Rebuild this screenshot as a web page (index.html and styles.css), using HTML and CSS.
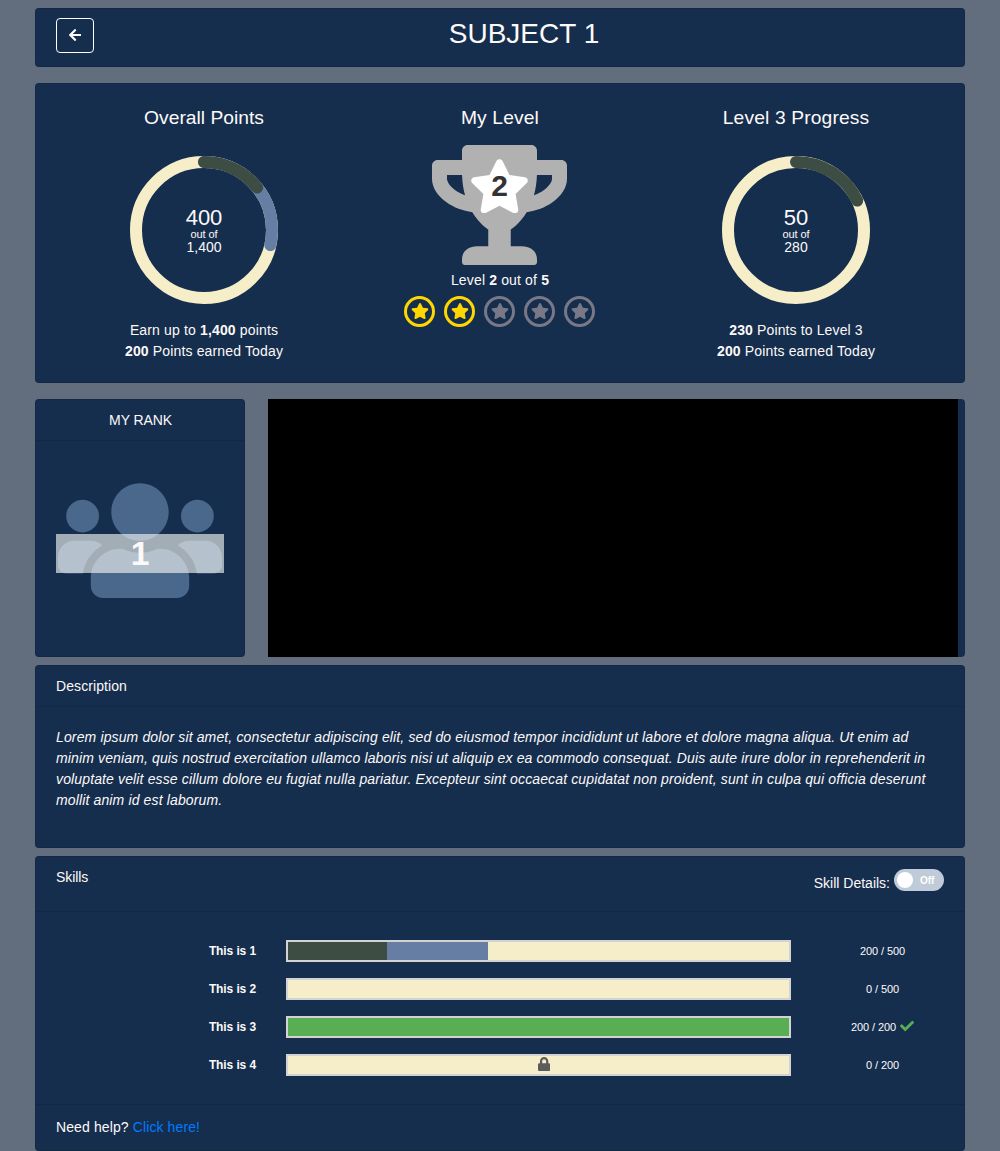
FILE: index.html
```html
<!DOCTYPE html>
<html lang="en">
<head>
<meta charset="utf-8">
<title>Subject 1</title>
<link rel="stylesheet" href="styles.css">
</head>
<body>
<svg class="defs" width="0" height="0" aria-hidden="true">
  <symbol id="star" viewBox="0 0 576 512"><path d="M259.3 17.8L194 150.2 47.9 171.5c-26.2 3.8-36.7 36.1-17.7 54.6l105.7 103-25 145.5c-4.5 26.3 23.2 46 46.4 33.7L288 439.6l130.7 68.7c23.2 12.2 50.9-7.4 46.4-33.7l-25-145.5 105.7-103c19-18.5 8.5-50.8-17.7-54.6L382 150.2 316.7 17.8c-11.7-23.6-45.6-23.9-57.4 0z"/></symbol>
</svg>
<main class="page">
  <header class="card title-bar">
    <button class="back" aria-label="Back"><svg viewBox="0 0 448 512"><path d="M257.5 445.1l-22.2 22.2c-9.4 9.4-24.6 9.4-33.9 0L7 273c-9.4-9.4-9.4-24.6 0-33.9L201.4 44.7c9.4-9.4 24.6-9.4 33.9 0l22.2 22.2c9.5 9.5 9.3 25-.4 34.3L136.6 216H424c13.3 0 24 10.7 24 24v32c0 13.3-10.7 24-24 24H136.6l120.5 114.8c9.8 9.3 10 24.8.4 34.3z"/></svg></button>
    <h1>SUBJECT 1</h1>
  </header>

  <section class="card summary">
    <div class="stat">
      <h2>Overall Points</h2>
      <div class="ring">
        <svg viewBox="0 0 148 148">
          <circle class="track" cx="74" cy="74" r="68"/>
          <circle class="today" cx="74" cy="74" r="68" pathLength="1400" stroke-dasharray="400 1400"/>
          <circle class="before" cx="74" cy="74" r="68" pathLength="1400" stroke-dasharray="200 1400"/>
        </svg>
        <div class="ring-label"><span class="big">400</span><span class="small">out of</span><span class="total">1,400</span></div>
      </div>
      <p>Earn up to <b>1,400</b> points</p>
      <p><b>200</b> Points earned Today</p>
    </div>
    <div class="stat level">
      <h2 class="spaced">My Level</h2>
      <div class="trophy">
        <svg class="cup" viewBox="0 0 576 512"><path d="M552 64H448V24c0-13.3-10.7-24-24-24H152c-13.3 0-24 10.7-24 24v40H24C10.7 64 0 74.7 0 88v56c0 35.7 22.5 72.5 61.9 100.7 31.5 22.7 69.8 37.1 110 41.7C203.3 338.5 240 360 240 360v72h-48c-35.3 0-64 20.7-64 56v12c0 6.6 5.4 12 12 12h296c6.6 0 12-5.4 12-12v-12c0-35.3-28.7-56-64-56h-48v-72s36.7-21.5 68.1-73.6c40.3-4.6 78.6-19 110-41.7 39.3-28.3 61.9-65 61.9-100.7V88c0-13.3-10.7-24-24-24zM99.3 192.8C74.9 175.2 64 155.6 64 144v-16h64.2c1 32.6 5.8 61.2 12.8 86.2-15.1-5.2-29.2-12.4-41.7-21.4zM512 144c0 16.1-17.7 36.1-35.3 48.8-12.5 9-26.7 16.2-41.8 21.4 7-25 11.8-53.6 12.8-86.2H512v16z"/></svg>
        <svg class="cup-star"><use href="#star"/></svg>
        <span class="cup-number">2</span>
      </div>
      <p>Level <b>2</b> out of <b>5</b></p>
      <div class="stars">
        <span class="earned"><svg><use href="#star"/></svg></span>
        <span class="earned"><svg><use href="#star"/></svg></span>
        <span><svg><use href="#star"/></svg></span>
        <span><svg><use href="#star"/></svg></span>
        <span><svg><use href="#star"/></svg></span>
      </div>
    </div>
    <div class="stat">
      <h2 class="spaced">Level 3 Progress</h2>
      <div class="ring">
        <svg viewBox="0 0 148 148">
          <circle class="track" cx="74" cy="74" r="68"/>
          <circle class="before" cx="74" cy="74" r="68" pathLength="280" stroke-dasharray="50 280"/>
        </svg>
        <div class="ring-label"><span class="big">50</span><span class="small">out of</span><span class="total">280</span></div>
      </div>
      <p class="to-level"><b>230</b> Points to Level 3</p>
      <p><b>200</b> Points earned Today</p>
    </div>
  </section>

  <div class="rank-row">
    <section class="card rank">
      <h3>MY RANK</h3>
      <div class="rank-body">
        <svg viewBox="0 0 640 512"><path d="M96 224c35.3 0 64-28.7 64-64s-28.7-64-64-64-64 28.7-64 64 28.7 64 64 64zm448 0c35.3 0 64-28.7 64-64s-28.7-64-64-64-64 28.7-64 64 28.7 64 64 64zm32 32h-64c-17.6 0-33.5 7.1-45.1 18.6 40.3 22.1 68.9 62 75.1 109.4h66c17.7 0 32-14.3 32-32v-32c0-35.3-28.7-64-64-64zm-256 0c61.9 0 112-50.1 112-112S381.9 32 320 32 208 82.1 208 144s50.1 112 112 112zm76.8 32h-8.3c-20.8 10-43.9 16-68.5 16s-47.6-6-68.5-16h-8.3C179.6 288 128 339.6 128 403.2V432c0 26.5 21.5 48 48 48h288c26.5 0 48-21.5 48-48v-28.8c0-63.6-51.6-115.2-115.2-115.2zm-223.7-13.4C161.5 263.1 145.6 256 128 256H64c-35.3 0-64 28.7-64 64v32c0 17.7 14.3 32 32 32h65.9c6.3-47.4 34.9-87.3 75.2-109.4z"/></svg>
        <span class="rank-number">1</span>
      </div>
    </section>
    <section class="history"><div class="chart"></div></section>
  </div>

  <section class="card description">
    <h3>Description</h3>
    <p>Lorem ipsum dolor sit amet, consectetur adipiscing elit, sed do eiusmod tempor incididunt ut labore et dolore magna aliqua. Ut enim ad minim veniam, quis nostrud exercitation ullamco laboris nisi ut aliquip ex ea commodo consequat. Duis aute irure dolor in reprehenderit in voluptate velit esse cillum dolore eu fugiat nulla pariatur. Excepteur sint occaecat cupidatat non proident, sunt in culpa qui officia deserunt mollit anim id est laborum.</p>
  </section>

  <section class="card skills">
    <div class="skills-head">
      <h3>Skills</h3>
      <div class="details">Skill Details: <span class="toggle"><i></i>Off</span></div>
    </div>
    <div class="skill-list">
      <div class="skill"><b>This is 1</b><div class="bar"><div class="before-bar" style="width:19.8%"></div><div class="today-bar" style="width:20.2%"></div></div><span>200 / 500</span></div>
      <div class="skill"><b>This is 2</b><div class="bar"></div><span>0 / 500</span></div>
      <div class="skill"><b>This is 3</b><div class="bar"><div class="done-bar" style="width:100%"></div></div><span>200 / 200 <svg class="check" viewBox="0 0 512 512"><path d="M173.898 439.404l-166.4-166.4c-9.997-9.997-9.997-26.206 0-36.204l36.203-36.204c9.997-9.998 26.207-9.998 36.204 0L192 312.69 432.095 72.596c9.997-9.997 26.207-9.997 36.204 0l36.203 36.204c9.997 9.997 9.997 26.206 0 36.204l-294.4 294.401c-9.998 9.997-26.207 9.997-36.204-.001z"/></svg></span></div>
      <div class="skill"><b>This is 4</b><div class="bar locked"><svg class="lock" viewBox="0 0 448 512"><path d="M400 224h-24v-72C376 68.2 307.8 0 224 0S72 68.2 72 152v72H48c-26.5 0-48 21.5-48 48v192c0 26.5 21.5 48 48 48h352c26.5 0 48-21.5 48-48V272c0-26.5-21.5-48-48-48zm-104 0H152v-72c0-39.7 32.3-72 72-72s72 32.3 72 72v72z"/></svg></div><span>0 / 200</span></div>
    </div>
    <footer>Need help? <a href="#">Click here!</a></footer>
  </section>
</main>
</body>
</html>
```
FILE: styles.css
```css
* { box-sizing: border-box; }
body {
  margin: 0;
  background: #626d7d;
  color: #fdf9f9;
  font: 14px/21px "Liberation Sans", Arial, sans-serif;
}
h1, h2, h3, p { margin: 0; font-weight: 400; }
svg { display: block; fill: currentColor; }
.defs { position: absolute; }

.page { width: 930px; margin: 0 auto; padding-top: 8px; }
.card {
  background: #152e4d;
  border: 1px solid rgba(0, 0, 0, .125);
  border-radius: 4px;
}
.card h3 { font-size: 14px; line-height: 21px; }

.title-bar {
  height: 59px;
  display: flex;
  align-items: flex-start;
  padding: 9px 20px;
}
.title-bar h1 { flex: 1; padding-left: 10px; font-size: 28px; line-height: 32px; text-align: center; }
.back {
  width: 38px;
  height: 35px;
  padding: 0 0 2px;
  display: flex;
  align-items: center;
  justify-content: center;
  color: #fff;
  background: transparent;
  border: 1px solid #fff;
  border-radius: 4px;
}
.back svg { width: 12.25px; height: 14px; }

.summary {
  height: 300px;
  margin-top: 16px;
  padding: 22px 20px 0;
  display: grid;
  grid-template-columns: repeat(3, 296px);
}
.stat { display: flex; flex-direction: column; align-items: center; }
.stat h2 { font-size: 19.25px; line-height: 24px; }
.stat h2.spaced { letter-spacing: .13px; }
.stat p { letter-spacing: .15px; }
.stat p.to-level { letter-spacing: .13px; }
.ring { display: grid; width: 148px; height: 148px; margin: 26px 0 16px; }
.ring svg, .ring-label { grid-area: 1 / 1; }
.ring svg { width: 148px; height: 148px; transform: rotate(-90deg); fill: none; stroke-width: 12; }
.track { stroke: #f6eec8; }
.today { stroke: #667da4; stroke-linecap: round; }
.before { stroke: #3e4d44; stroke-linecap: round; }
.ring-label { display: flex; flex-direction: column; align-items: center; padding-top: 50px; }
.big { font-size: 22px; line-height: 24px; }
.small { margin-top: -1px; font-size: 11px; line-height: 10px; letter-spacing: -.1px; }
.total { font-size: 14px; line-height: 16px; }

.trophy { position: relative; width: 135px; height: 120px; margin: 15px 0 5px; color: #b1b1b1; }
.level .trophy, .level .stars { margin-right: 1px; }
.cup { width: 135px; height: 120px; }
.cup-star { position: absolute; left: 37px; top: 13.5px; width: 61px; height: 54.5px; color: #fff; }
.cup-number { position: absolute; inset: 26px 0 auto; color: #333; font-size: 30px; line-height: 30px; font-weight: 700; text-align: center; }
.stars { display: flex; gap: 9px; margin-top: 5px; }
.stars span {
  width: 31px;
  height: 31px;
  display: flex;
  align-items: center;
  justify-content: center;
  border: 3px solid;
  border-radius: 50%;
  color: #787886;
}
.stars .earned { color: #ffd700; }
.stars svg { width: 18px; height: 16px; margin: -1px 0 0 1px; }

.rank-row { display: flex; gap: 23px; height: 258px; margin-top: 16px; }
.rank { width: 210px; }
.rank h3 { padding: 10px 0 9px 1px; border-bottom: 1px solid rgba(0, 0, 0, .125); text-align: center; letter-spacing: -.1px; }
.rank-body { position: relative; margin: 34px 20px 0; }
.rank-body svg { width: 164px; height: 131.25px; margin: 0 auto; color: #4a678c; }
.rank-number {
  position: absolute;
  inset: 59px 0 auto;
  height: 39px;
  background: rgba(243, 246, 243, .64);
  font-size: 33.6px;
  line-height: 39px;
  font-weight: 700;
  text-align: center;
}
.history { flex: 1; padding-right: 7px; background: #152e4d; border-radius: 0 4px 4px 0; }
.chart { height: 100%; background: #000; }

.description { height: 183px; margin-top: 8px; }
.description h3 { padding: 10px 20px 9px; border-bottom: 1px solid rgba(0, 0, 0, .125); letter-spacing: .08px; }
.description p { padding: 20px; font-style: italic; letter-spacing: .135px; }

.skills { height: 295px; margin-top: 8px; }
.skills-head {
  height: 55px;
  display: flex;
  justify-content: space-between;
  padding: 10px 20px;
  border-bottom: 1px solid rgba(0, 0, 0, .125);
}
.skills h3 { letter-spacing: -.1px; }
.details { display: flex; gap: 4px; padding-top: 2px; line-height: 29px; }
.toggle {
  width: 50px;
  height: 22px;
  display: flex;
  align-items: center;
  gap: 7px;
  padding-left: 3px;
  border-radius: 11px;
  background: #bfcbd9;
  color: #fff;
  font-size: 10px;
  font-weight: 700;
}
.toggle i { width: 16px; height: 16px; border-radius: 50%; background: #fff; }
.skill-list { height: 193px; padding-top: 28px; display: flex; flex-direction: column; gap: 16px; border-bottom: 1px solid rgba(0, 0, 0, .125); }
.skill { display: grid; grid-template-columns: 220px 505px 122px; column-gap: 30px; height: 22px; align-items: center; }
.skill b { font-size: 12px; text-align: right; letter-spacing: -.1px; }
.skill span { display: flex; align-items: center; justify-content: center; gap: 4px; padding-left: 1px; font-size: 11px; letter-spacing: -.1px; }
.bar { display: flex; height: 22px; border: 2px solid #d3d3d3; background: #f6eec8; }
.before-bar { background: #3e4d44; }
.today-bar { background: #667da4; }
.done-bar { background: #59ad52; }
.locked { justify-content: center; padding-left: 11px; }
.lock { width: 12.25px; height: 14px; margin-top: 1px; color: #5c5c5c; }
.check { width: 14px; height: 14px; margin-top: -3px; color: #59ad52; }
.skills footer { padding: 12px 20px; letter-spacing: .11px; }
.skills a { color: #007bff; text-decoration: none; }
```
